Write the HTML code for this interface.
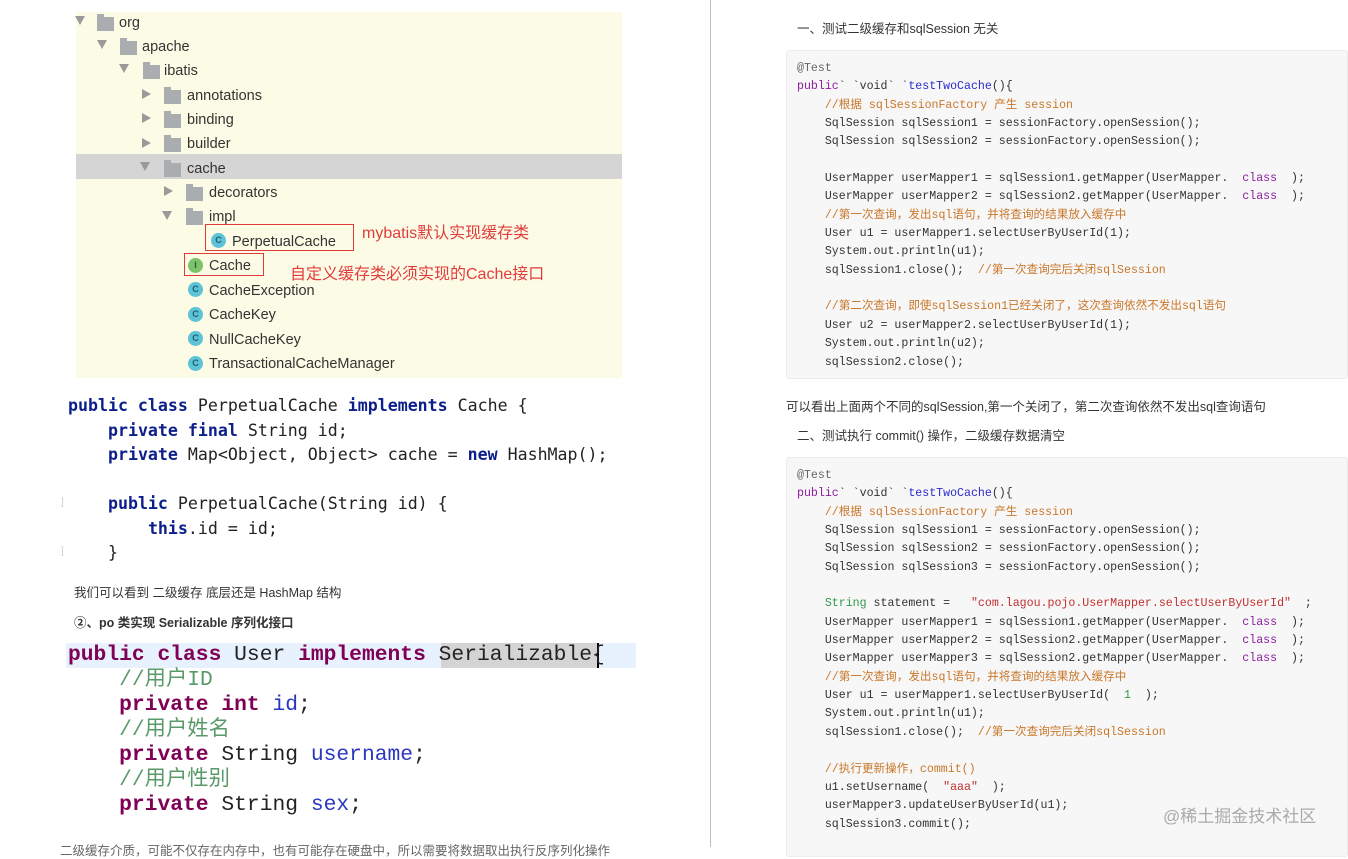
<!DOCTYPE html>
<html><head><meta charset="utf-8"><style>
*{margin:0;padding:0;box-sizing:border-box}
body{width:1348px;height:847px;overflow:hidden;background:#fff;position:relative;font-family:"Liberation Sans","Noto Sans CJK SC",sans-serif}
.a{position:absolute;white-space:pre}
.tree{position:absolute;left:76px;top:12px;width:546px;height:366px;background:#fcfce6}
.hl{position:absolute;left:76px;top:154px;width:546px;height:25px;background:#d5d5d5}
.t{position:absolute;font-size:14.5px;color:#333;white-space:pre;line-height:18px;margin-top:2px}
.tri{position:absolute;width:0;height:0}
.td{border-left:5px solid transparent;border-right:5px solid transparent;border-top:9px solid #9a9a9a}
.tr{border-top:5px solid transparent;border-bottom:5px solid transparent;border-left:9px solid #9a9a9a}
.fo{position:absolute;width:17px;height:14px;background:#a9adb0;margin-top:2px}
.fo:after{content:"";position:absolute;left:0;top:-3px;width:7px;height:3px;background:#a9adb0}
.ci{position:absolute;width:15px;height:15px;border-radius:50%;background:#5ec3d6;color:#1e5f70;font-size:9px;text-align:center;line-height:15px;font-weight:bold;margin-top:1px}
.ii{background:#7cc36b;color:#2f5a2a}
.box{position:absolute;border:1.5px solid #e03a3a}
.red{position:absolute;color:#e23b3b;font-size:16px;white-space:pre}
.jc{font-family:"DejaVu Sans Mono","Liberation Mono",monospace;font-size:16.6px;color:#222;line-height:24.5px}
.k{color:#0b1e8a;font-weight:bold}
.uc{font-family:"Liberation Mono","Noto Sans CJK SC",monospace;font-size:21.3px;color:#222;line-height:25px}
.kw{color:#7f0055;font-weight:bold}
.fd{color:#2a36c0}
.cm{color:#5a9a6a}
.cb{position:absolute;left:786px;width:562px;background:#f7f7f7;border:1px solid #ececec;border-radius:3px}
.cl{position:absolute;font-family:"Liberation Mono","Noto Sans CJK SC",monospace;font-size:11.6px;color:#333;white-space:pre;line-height:18.35px}
.p{color:#8a1e9e}.o{color:#c9772a}.b{color:#2a2ad0}.g{color:#2e9a4a}.s{color:#c03030}
.tx{position:absolute;font-size:12.5px;color:#333;white-space:pre;font-family:"Liberation Sans","Noto Sans CJK SC",sans-serif}
</style></head><body>
<div class="tree"></div><div class="hl"></div>
<div class="tri td" style="left:75px;top:16px"></div><div class="fo" style="left:97px;top:15px"></div><div class="t" style="left:119px;top:12px">org</div>
<div class="tri td" style="left:97px;top:40px"></div><div class="fo" style="left:120px;top:39px"></div><div class="t" style="left:142px;top:36px">apache</div>
<div class="tri td" style="left:119px;top:64px"></div><div class="fo" style="left:143px;top:63px"></div><div class="t" style="left:164px;top:60px">ibatis</div>
<div class="tri tr" style="left:142px;top:89px"></div><div class="fo" style="left:164px;top:88px"></div><div class="t" style="left:187px;top:85px">annotations</div>
<div class="tri tr" style="left:142px;top:113px"></div><div class="fo" style="left:164px;top:112px"></div><div class="t" style="left:187px;top:109px">binding</div>
<div class="tri tr" style="left:142px;top:138px"></div><div class="fo" style="left:164px;top:136px"></div><div class="t" style="left:187px;top:133px">builder</div>
<div class="tri td" style="left:140px;top:162px"></div><div class="fo" style="left:164px;top:161px"></div><div class="t" style="left:187px;top:158px">cache</div>
<div class="tri tr" style="left:164px;top:186px"></div><div class="fo" style="left:186px;top:185px"></div><div class="t" style="left:209px;top:182px">decorators</div>
<div class="tri td" style="left:162px;top:211px"></div><div class="fo" style="left:186px;top:209px"></div><div class="t" style="left:209px;top:206px">impl</div>
<div class="ci" style="left:211px;top:232px">C</div><div class="t" style="left:232px;top:231px">PerpetualCache</div>
<div class="box" style="left:205px;top:224px;width:149px;height:27px"></div>
<div class="red" style="left:362px;top:219px">mybatis默认实现缓存类</div>
<div class="ci ii" style="left:188px;top:257px">I</div><div class="t" style="left:209px;top:255px">Cache</div>
<div class="box" style="left:184px;top:253px;width:80px;height:23px"></div>
<div class="red" style="left:290px;top:260px">自定义缓存类必须实现的Cache接口</div>
<div class="ci" style="left:188px;top:281px">C</div><div class="t" style="left:209px;top:280px">CacheException</div>
<div class="ci" style="left:188px;top:306px">C</div><div class="t" style="left:209px;top:304px">CacheKey</div>
<div class="ci" style="left:188px;top:330px">C</div><div class="t" style="left:209px;top:329px">NullCacheKey</div>
<div class="ci" style="left:188px;top:355px">C</div><div class="t" style="left:209px;top:353px">TransactionalCacheManager</div>

<div class="a jc" style="left:68px;top:394px"><span class="k">public class</span> PerpetualCache <span class="k">implements</span> Cache {
    <span class="k">private final</span> String id;
    <span class="k">private</span> Map&lt;Object, Object&gt; cache = <span class="k">new</span> HashMap();

    <span class="k">public</span> PerpetualCache(String id) {
        <span class="k">this</span>.id = id;
    }</div>
<div class="a" style="left:61px;top:497px;color:#ccc;font-size:10px">]</div>
<div class="a" style="left:61px;top:546px;color:#ccc;font-size:10px">]</div>

<div class="tx" style="left:74px;top:582px">我们可以看到 二级缓存 底层还是 HashMap 结构</div>
<div class="tx" style="left:74px;top:612px;font-weight:bold">②、po 类实现 Serializable 序列化接口</div>

<div class="a" style="left:66px;top:643px;width:570px;height:25px;background:#e8f2fe"></div>
<div class="a" style="left:441px;top:643px;width:157px;height:25px;background:#d4d4d4"></div>
<div class="a" style="left:597px;top:643px;width:2px;height:25px;background:#000"></div>
<div class="a uc" style="left:68px;top:643px"><span class="kw">public class</span> User <span class="kw">implements</span> Serializable{
    <span class="cm">//用户ID</span>
    <span class="kw">private int</span> <span class="fd">id</span>;
    <span class="cm">//用户姓名</span>
    <span class="kw">private</span> String <span class="fd">username</span>;
    <span class="cm">//用户性别</span>
    <span class="kw">private</span> String <span class="fd">sex</span>;</div>
<div class="tx" style="left:60px;top:840px;color:#666">二级缓存介质，可能不仅存在内存中，也有可能存在硬盘中，所以需要将数据取出执行反序列化操作</div>

<div class="a" style="left:710px;top:0;width:1px;height:847px;background:#bbb"></div>

<div class="tx" style="left:797px;top:18px">一、测试二级缓存和sqlSession 无关</div>
<div class="cb" style="top:50px;height:329px"></div>
<div class="cl" style="left:797px;top:60px"><span style="color:#666">@Test</span>
<span class="p">public</span>` `void` `<span class="b">testTwoCache</span>(){
    <span class="o">//根据 sqlSessionFactory 产生 session</span>
    SqlSession sqlSession1 = sessionFactory.openSession();
    SqlSession sqlSession2 = sessionFactory.openSession();

    UserMapper userMapper1 = sqlSession1.getMapper(UserMapper.  <span class="p">class</span>  );
    UserMapper userMapper2 = sqlSession2.getMapper(UserMapper.  <span class="p">class</span>  );
    <span class="o">//第一次查询，发出sql语句，并将查询的结果放入缓存中</span>
    User u1 = userMapper1.selectUserByUserId(1);
    System.out.println(u1);
    sqlSession1.close();  <span class="o">//第一次查询完后关闭sqlSession</span>

    <span class="o">//第二次查询，即使sqlSession1已经关闭了，这次查询依然不发出sql语句</span>
    User u2 = userMapper2.selectUserByUserId(1);
    System.out.println(u2);
    sqlSession2.close();</div>
<div class="tx" style="left:786px;top:396px">可以看出上面两个不同的sqlSession,第一个关闭了，第二次查询依然不发出sql查询语句</div>
<div class="tx" style="left:797px;top:425px">二、测试执行 commit() 操作，二级缓存数据清空</div>
<div class="cb" style="top:457px;height:400px"></div>
<div class="cl" style="left:797px;top:467px"><span style="color:#666">@Test</span>
<span class="p">public</span>` `void` `<span class="b">testTwoCache</span>(){
    <span class="o">//根据 sqlSessionFactory 产生 session</span>
    SqlSession sqlSession1 = sessionFactory.openSession();
    SqlSession sqlSession2 = sessionFactory.openSession();
    SqlSession sqlSession3 = sessionFactory.openSession();

    <span class="g">String</span> statement =   <span class="s">"com.lagou.pojo.UserMapper.selectUserByUserId"</span>  ;
    UserMapper userMapper1 = sqlSession1.getMapper(UserMapper.  <span class="p">class</span>  );
    UserMapper userMapper2 = sqlSession2.getMapper(UserMapper.  <span class="p">class</span>  );
    UserMapper userMapper3 = sqlSession2.getMapper(UserMapper.  <span class="p">class</span>  );
    <span class="o">//第一次查询，发出sql语句，并将查询的结果放入缓存中</span>
    User u1 = userMapper1.selectUserByUserId(  <span class="g">1</span>  );
    System.out.println(u1);
    sqlSession1.close();  <span class="o">//第一次查询完后关闭sqlSession</span>

    <span class="o">//执行更新操作，commit()</span>
    u1.setUsername(  <span class="s">"aaa"</span>  );
    userMapper3.updateUserByUserId(u1);
    sqlSession3.commit();</div>
<div class="a" style="left:1163px;top:802px;font-size:17px;color:rgba(150,150,150,0.8);font-family:'Liberation Sans','Noto Sans CJK SC',sans-serif">@稀土掘金技术社区</div>
</body></html>
